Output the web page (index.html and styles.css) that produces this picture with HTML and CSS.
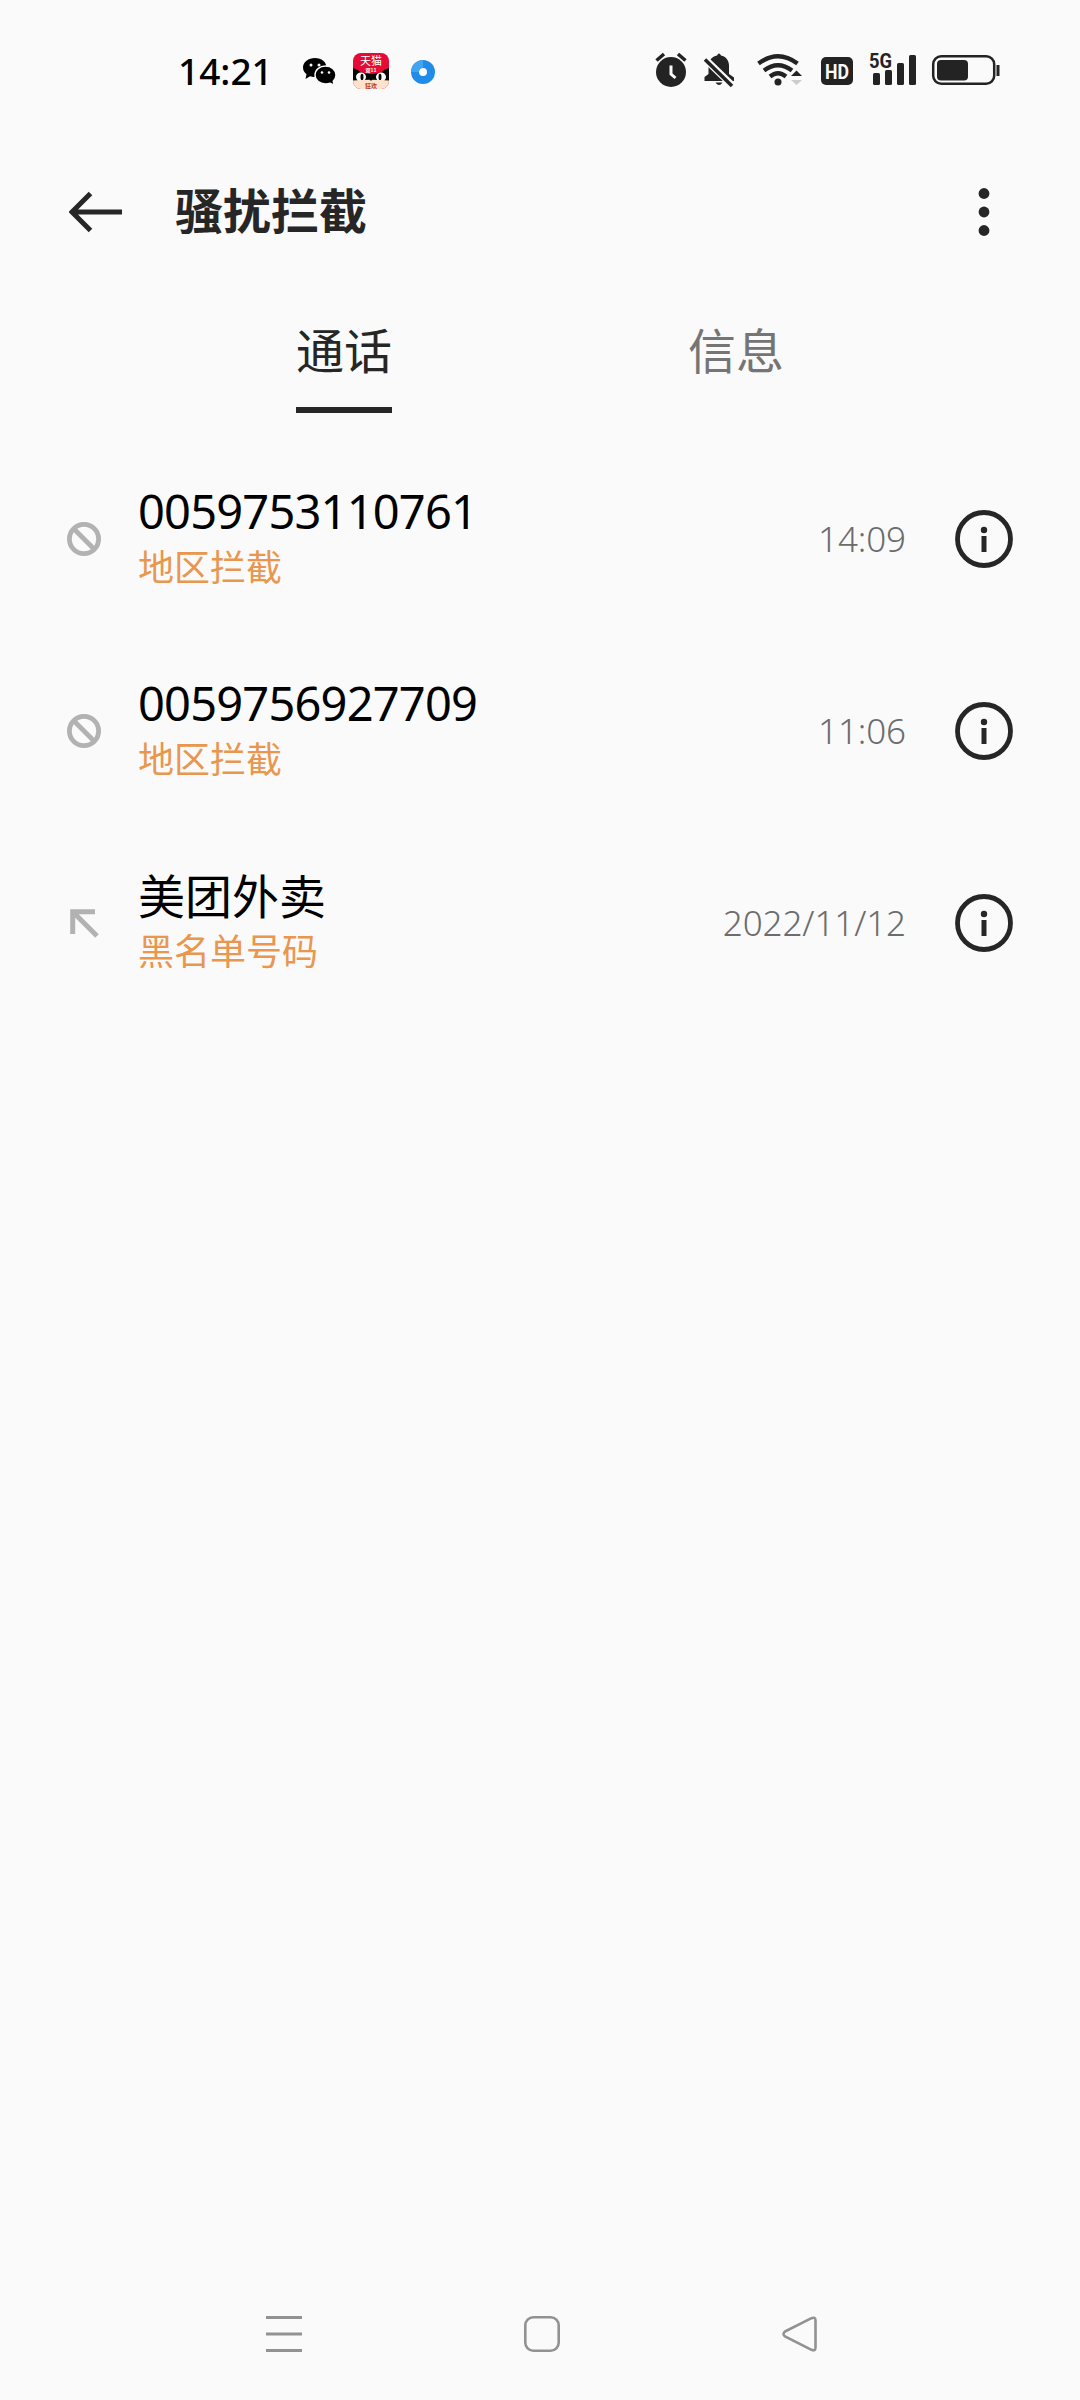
FILE: index.html
```html
<!DOCTYPE html>
<html lang="zh-CN">
<head>
<meta charset="utf-8">
<title>骚扰拦截</title>
<link rel="stylesheet" href="styles.css">
</head>
<body>
<div class="screen">
  <div class="status">
    <span class="clock">14:21</span>
    <svg class="notifications" width="140" height="42" viewBox="0 0 140 42">
      <path d="M13 7c6.500 0 11.500 4 11.500 9.500S20 26 13 26c-2 0-3.500-.3-5-.8L3.500 28l1-4.800C2.300 21.500 1 19.300 1 16.500 1 11 6.500 7 13 7Z"/>
      <circle cx="9" cy="14" r="1.500" fill="#fafafa"/><circle cx="17" cy="14" r="1.500" fill="#fafafa"/>
      <path d="M23.500 15c6 0 10.500 4 10.500 9 0 2.500-1 4.500-2.800 6.200l1 4-4-2c-1.500.6-3 .8-4.700.8-6 0-10.500-4-10.500-9s4.500-9 10.500-9Z" stroke="#fafafa" stroke-width="1.400"/>
      <circle cx="20" cy="21.500" r="1.300" fill="#fafafa"/><circle cx="27" cy="21.500" r="1.300" fill="#fafafa"/>
      <clipPath id="shop"><rect x="51" y="2" width="36" height="36" rx="8"/></clipPath>
      <g clip-path="url(#shop)">
        <rect x="51" y="2" width="36" height="36" fill="#e40b35"/>
        <path d="M51 17q5 1 8 4.500h20q3-3.500 8-4.500v14H51Z" fill="#080808"/>
        <path d="M57 18h24q-3 5-12 5t-12-5Z" fill="#e40b35"/>
        <ellipse cx="59" cy="26" rx="5" ry="4.500" fill="#fff"/><ellipse cx="79" cy="26" rx="5" ry="4.500" fill="#fff"/>
        <ellipse cx="60" cy="26" rx="1.500" ry="3.200"/><ellipse cx="78" cy="26" rx="1.500" ry="3.200"/>
        <path d="M51 29.500q18-1.500 36 0V38H51Z" fill="#fde3cc"/>
        <path d="M67.500 28h3l-1.500 2Z"/>
        <text class="shop-name" x="69" y="14" text-anchor="middle">天猫</text>
        <text class="shop-sub" x="69" y="20.500" text-anchor="middle">双11</text>
        <text class="shop-foot" x="69" y="36.500" text-anchor="middle">狂欢</text>
      </g>
      <circle cx="121" cy="21" r="8" fill="none" stroke="#218bea" stroke-width="8"/>
      <path d="M113 21a8 8 0 0 1 8-8" fill="none" stroke="#43a5f2" stroke-width="8"/>
    </svg>
    <svg class="indicators" width="348" height="42" viewBox="0 0 348 42">
      <g fill="#232323">
        <circle cx="17" cy="22" r="15"/>
        <path d="M2.500 10.500 10 4M31.500 10.500 24 4" fill="none" stroke="#232323" stroke-width="3.500"/>
        <path d="M17 15.500V24l4.500 4" fill="none" stroke="#fafafa" stroke-width="3"/>
        <path d="M50.500 31v-4l4-3V15.500C54.500 10.500 58 6.500 63 5.500q2-4 4 0c5 1 8 5 8 10V24l5 3.500V31ZM61.500 32.500h7q-3.500 5-7 0Z"/>
        <path d="m51 9 29 28" stroke="#fafafa" stroke-width="7"/>
        <path d="m51 9.500 27 26.500" stroke="#232323" stroke-width="3.500"/>
        <g fill="none" stroke="#232323" stroke-width="4.300">
          <path d="M104.500 13.500q19.500-14.500 39 0M110 20.500q14-10.500 28 0M116 26.500q8-6.500 16 0"/>
        </g>
        <circle cx="124" cy="32" r="3.500"/>
        <path d="m142 19-9 9v7h16V22Z" fill="#fafafa"/>
        <path d="M137 26h11l-5.500-5.500Z"/><path d="M137 30h11l-5.500 5Z" fill="#ccc"/>
        <rect x="167" y="7" width="32" height="28" rx="5"/>
        <text class="hd" x="183" y="28.500" text-anchor="middle" textLength="24" lengthAdjust="spacingAndGlyphs">HD</text>
        <text class="net" x="215" y="18" textLength="23" lengthAdjust="spacingAndGlyphs">5G</text>
        <rect x="219" y="23" width="7" height="12" rx="1.500"/><rect x="231" y="20" width="7" height="15" rx="1.500"/>
        <rect x="243" y="13" width="7" height="22" rx="1.500"/><rect x="255" y="5" width="7" height="30" rx="1.500"/>
        <rect x="279.200" y="6.200" width="61" height="27.600" rx="8" fill="none" stroke="#232323" stroke-width="2.500"/>
        <rect x="283" y="10" width="31" height="20.500" rx="4"/><rect x="342.500" y="15" width="3" height="11"/>
      </g>
    </svg>
  </div>
  <header class="header">
    <svg class="back" width="54" height="42" viewBox="0 0 54 42"><path d="M53 21H3M21.500 2.500 3 21l18.500 18.500" fill="none" stroke="#262626" stroke-width="5"/></svg>
    <h1>骚扰拦截</h1>
    <svg width="12" height="50" viewBox="0 0 12 50" fill="#262626"><circle cx="6" cy="6.500" r="5.400"/><circle cx="6" cy="25" r="5.400"/><circle cx="6" cy="43.500" r="5.400"/></svg>
  </header>
  <nav class="tabs"><span class="tab active">通话</span><span class="tab">信息</span></nav>
  <main>
    <div class="row">
      <svg class="kind" width="34" height="34" viewBox="0 0 34 34"><g fill="none" stroke="#b2b2b2" stroke-width="4.800"><circle cx="17" cy="17" r="14.600"/><path d="m7 7 20 20"/></g></svg>
      <div class="who"><div class="name">0059753110761</div><div class="reason">地区拦截</div></div>
      <span class="when">14:09</span>
      <svg class="info" width="58" height="58" viewBox="0 0 58 58"><circle cx="29" cy="29" r="26.500" fill="none" stroke="#262626" stroke-width="4.800"/><circle cx="29" cy="20" r="3.200" fill="#262626"/><path d="M26.500 26h5v16h-5z" fill="#262626"/></svg>
    </div>
    <div class="row">
      <svg class="kind" width="34" height="34" viewBox="0 0 34 34"><g fill="none" stroke="#b2b2b2" stroke-width="4.800"><circle cx="17" cy="17" r="14.600"/><path d="m7 7 20 20"/></g></svg>
      <div class="who"><div class="name">0059756927709</div><div class="reason">地区拦截</div></div>
      <span class="when">11:06</span>
      <svg class="info" width="58" height="58" viewBox="0 0 58 58"><circle cx="29" cy="29" r="26.500" fill="none" stroke="#262626" stroke-width="4.800"/><circle cx="29" cy="20" r="3.200" fill="#262626"/><path d="M26.500 26h5v16h-5z" fill="#262626"/></svg>
    </div>
    <div class="row">
      <svg class="kind" width="34" height="34" viewBox="0 0 34 34"><path d="M28 5.700H5.700V28M6 6l24 24" fill="none" stroke="#b2b2b2" stroke-width="5"/></svg>
      <div class="who"><div class="name han">美团外卖</div><div class="reason">黑名单号码</div></div>
      <span class="when">2022/11/12</span>
      <svg class="info" width="58" height="58" viewBox="0 0 58 58"><circle cx="29" cy="29" r="26.500" fill="none" stroke="#262626" stroke-width="4.800"/><circle cx="29" cy="20" r="3.200" fill="#262626"/><path d="M26.500 26h5v16h-5z" fill="#262626"/></svg>
    </div>
  </main>
  <footer class="navbar">
    <svg width="36" height="36" viewBox="0 0 36 36"><path d="M0 1.500h36M0 18h36M0 34.500h36" stroke="#929292" stroke-width="3"/></svg>
    <svg width="36" height="36" viewBox="0 0 36 36"><rect x="1.300" y="1.300" width="33.400" height="33.400" rx="8" fill="none" stroke="#929292" stroke-width="2.600"/></svg>
    <svg width="36" height="36" viewBox="0 0 36 36"><path d="M3 15.500 29.500 2.200q4-1.700 4 2.300v27q0 4-4 2.300L3 20.500q-3-2.500 0-5Z" fill="none" stroke="#929292" stroke-width="2.600"/></svg>
  </footer>
</div>
</body>
</html>
```

FILE: styles.css
```css
* { box-sizing: border-box; }
body { margin: 0; background: #fafafa; font-family: "Noto Sans", "Noto Sans CJK SC", sans-serif; }
svg { display: block; flex: none; }
.screen { width: 1080px; height: 2400px; display: flex; flex-direction: column; }
.status { height: 142px; padding-left: 178px; display: flex; align-items: center; }
.clock { width: 124px; font-size: 37px; font-weight: 500; line-height: 50px; color: #000; }
.notifications { margin-top: 2px; }
.indicators { margin-left: 212px; }
.shop-name { font: 400 11px "Noto Sans CJK SC", sans-serif; fill: #fff; }
.shop-sub { font: 700 5px "Noto Sans CJK SC", sans-serif; fill: #fff; }
.shop-foot { font: 700 6px "Noto Sans CJK SC", sans-serif; fill: #b3392c; }
.hd { font: 700 21px Roboto, sans-serif; fill: #fafafa; }
.net { font: 700 21px Roboto, sans-serif; fill: #232323; }
.header { height: 140px; padding: 0 90px 0 69px; display: flex; align-items: center; }
h1 { flex: 1; margin: -9px 0 0 52px; font: 700 48px/60px "Noto Sans CJK SC", sans-serif; color: #262626; }
.tabs { height: 131px; padding: 32px 0 0 296px; display: flex; gap: 296px; }
.tab { width: 96px; height: 99px; font: 400 48px/68px "Noto Sans CJK SC", sans-serif; color: #757575; }
.active { color: #262626; border-bottom: 6px solid #262626; }
main { flex: 1; padding-top: 30px; }
.row { height: 192px; padding: 0 67px; display: flex; align-items: center; }
.who { flex: 1; margin: -4px 0 0 37px; }
.name { font-size: 47px; line-height: 56px; letter-spacing: -.8px; color: #000; }
.han { font: 400 47px/54px "Noto Sans CJK SC", sans-serif; letter-spacing: 0; padding-bottom: 2px; }
.reason { font: 400 36px/52px "Noto Sans CJK SC", sans-serif; color: #e9964f; }
.when { font-size: 35px; font-weight: 300; line-height: 50px; letter-spacing: -.1px; color: #6c6c6c; }
.info { margin-left: 49px; }
.navbar { height: 132px; padding: 0 262px 0 266px; display: flex; justify-content: space-between; align-items: center; }
```
